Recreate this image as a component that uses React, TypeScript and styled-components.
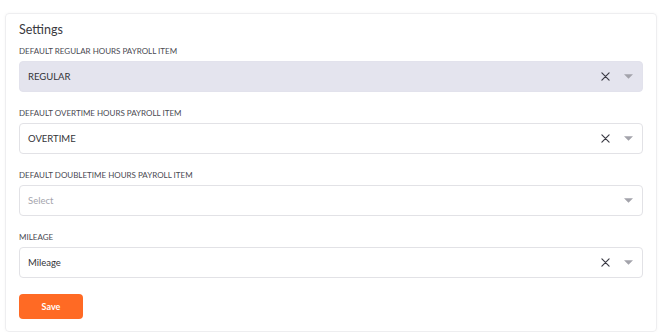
import { createGlobalStyle, styled } from 'styled-components';

const GlobalStyle = createGlobalStyle`
  body {
    margin: 0;
    background: #ffffff;
    font-family: Lato, "Noto Sans", sans-serif;
    color: #333338;
  }
`;

const Card = styled.div`
  margin: 13px 0 0 5px;
  width: 652px;
  box-sizing: border-box;
  padding: 7px 13px 12px 13px;
  border: 1px solid #eeeef0;
  border-radius: 4px;
  box-shadow: 0 0 3px rgba(0, 0, 0, 0.04);
  display: flex;
  flex-direction: column;
`;

const Title = styled.h3`
  margin: 0 0 6px 0;
  font-size: 12.5px;
  line-height: 18px;
  font-weight: 400;
  color: #3a3a40;
`;

const Field = styled.div`
  display: flex;
  flex-direction: column;
  gap: 4px;
  margin-bottom: 15px;
`;

const Label = styled.label`
  font-size: 8px;
  line-height: 12px;
  color: #4a4a52;
  text-transform: uppercase;
`;

const Box = styled.div<{ $disabled?: boolean }>`
  height: 31px;
  box-sizing: border-box;
  width: 624px;
  display: flex;
  align-items: center;
  padding: 0 4px 0 8px;
  border: 1px solid ${(p) => (p.$disabled ? '#e2e2ec' : '#e2e2e6')};
  border-radius: 4px;
  background: ${(p) => (p.$disabled ? '#e4e4ee' : '#ffffff')};
`;

const Value = styled.span<{ $placeholder?: boolean }>`
  flex: 1;
  font-size: 9.5px;
  color: ${(p) => (p.$placeholder ? '#a4a4ac' : '#333338')};
`;

const IconSlot = styled.span<{ $gap?: number }>`
  display: flex;
  align-items: center;
  justify-content: center;
  width: 20px;
  height: 20px;
  margin-left: ${(p) => p.$gap ?? 0}px;
`;

const Actions = styled.div`
  padding-top: 1px;
`;

const SaveButton = styled.button`
  width: 64px;
  height: 25px;
  border: none;
  border-radius: 4px;
  background: #ff6a24;
  color: #ffffff;
  font-family: Lato, "Noto Sans", sans-serif;
  font-size: 9px;
  font-weight: 700;
  cursor: pointer;
`;

function ClearIcon() {
  return (
    <svg width="9" height="9" viewBox="0 0 10 10">
      <path d="M1 1 L9 9 M9 1 L1 9" stroke="#3a3a44" strokeWidth="1.3" strokeLinecap="round" />
    </svg>
  );
}

function Caret() {
  return (
    <svg width="9" height="5" viewBox="0 0 10 5">
      <path d="M0 0 L10 0 L5 5 Z" fill="#a3a3ab" />
    </svg>
  );
}

type Row = { label: string; value: string; disabled?: boolean };

const rows: Row[] = [
  { label: 'Default Regular Hours Payroll Item', value: 'REGULAR', disabled: true },
  { label: 'Default Overtime Hours Payroll Item', value: 'OVERTIME' },
  { label: 'Default Doubletime Hours Payroll Item', value: '' },
  { label: 'Mileage', value: 'Mileage' },
];

function App() {
  return (
    <>
      <GlobalStyle />
      <Card>
        <Title>Settings</Title>
        {rows.map((row, i) => (
          <Field key={i}>
            <Label>{row.label}</Label>
            <Box $disabled={row.disabled}>
              <Value $placeholder={!row.value}>{row.value || 'Select'}</Value>
              {row.value && (
                <IconSlot>
                  <ClearIcon />
                </IconSlot>
              )}
              <IconSlot $gap={3}>
                <Caret />
              </IconSlot>
            </Box>
          </Field>
        ))}
        <Actions>
          <SaveButton>Save</SaveButton>
        </Actions>
      </Card>
    </>
  );
}

export default App;
